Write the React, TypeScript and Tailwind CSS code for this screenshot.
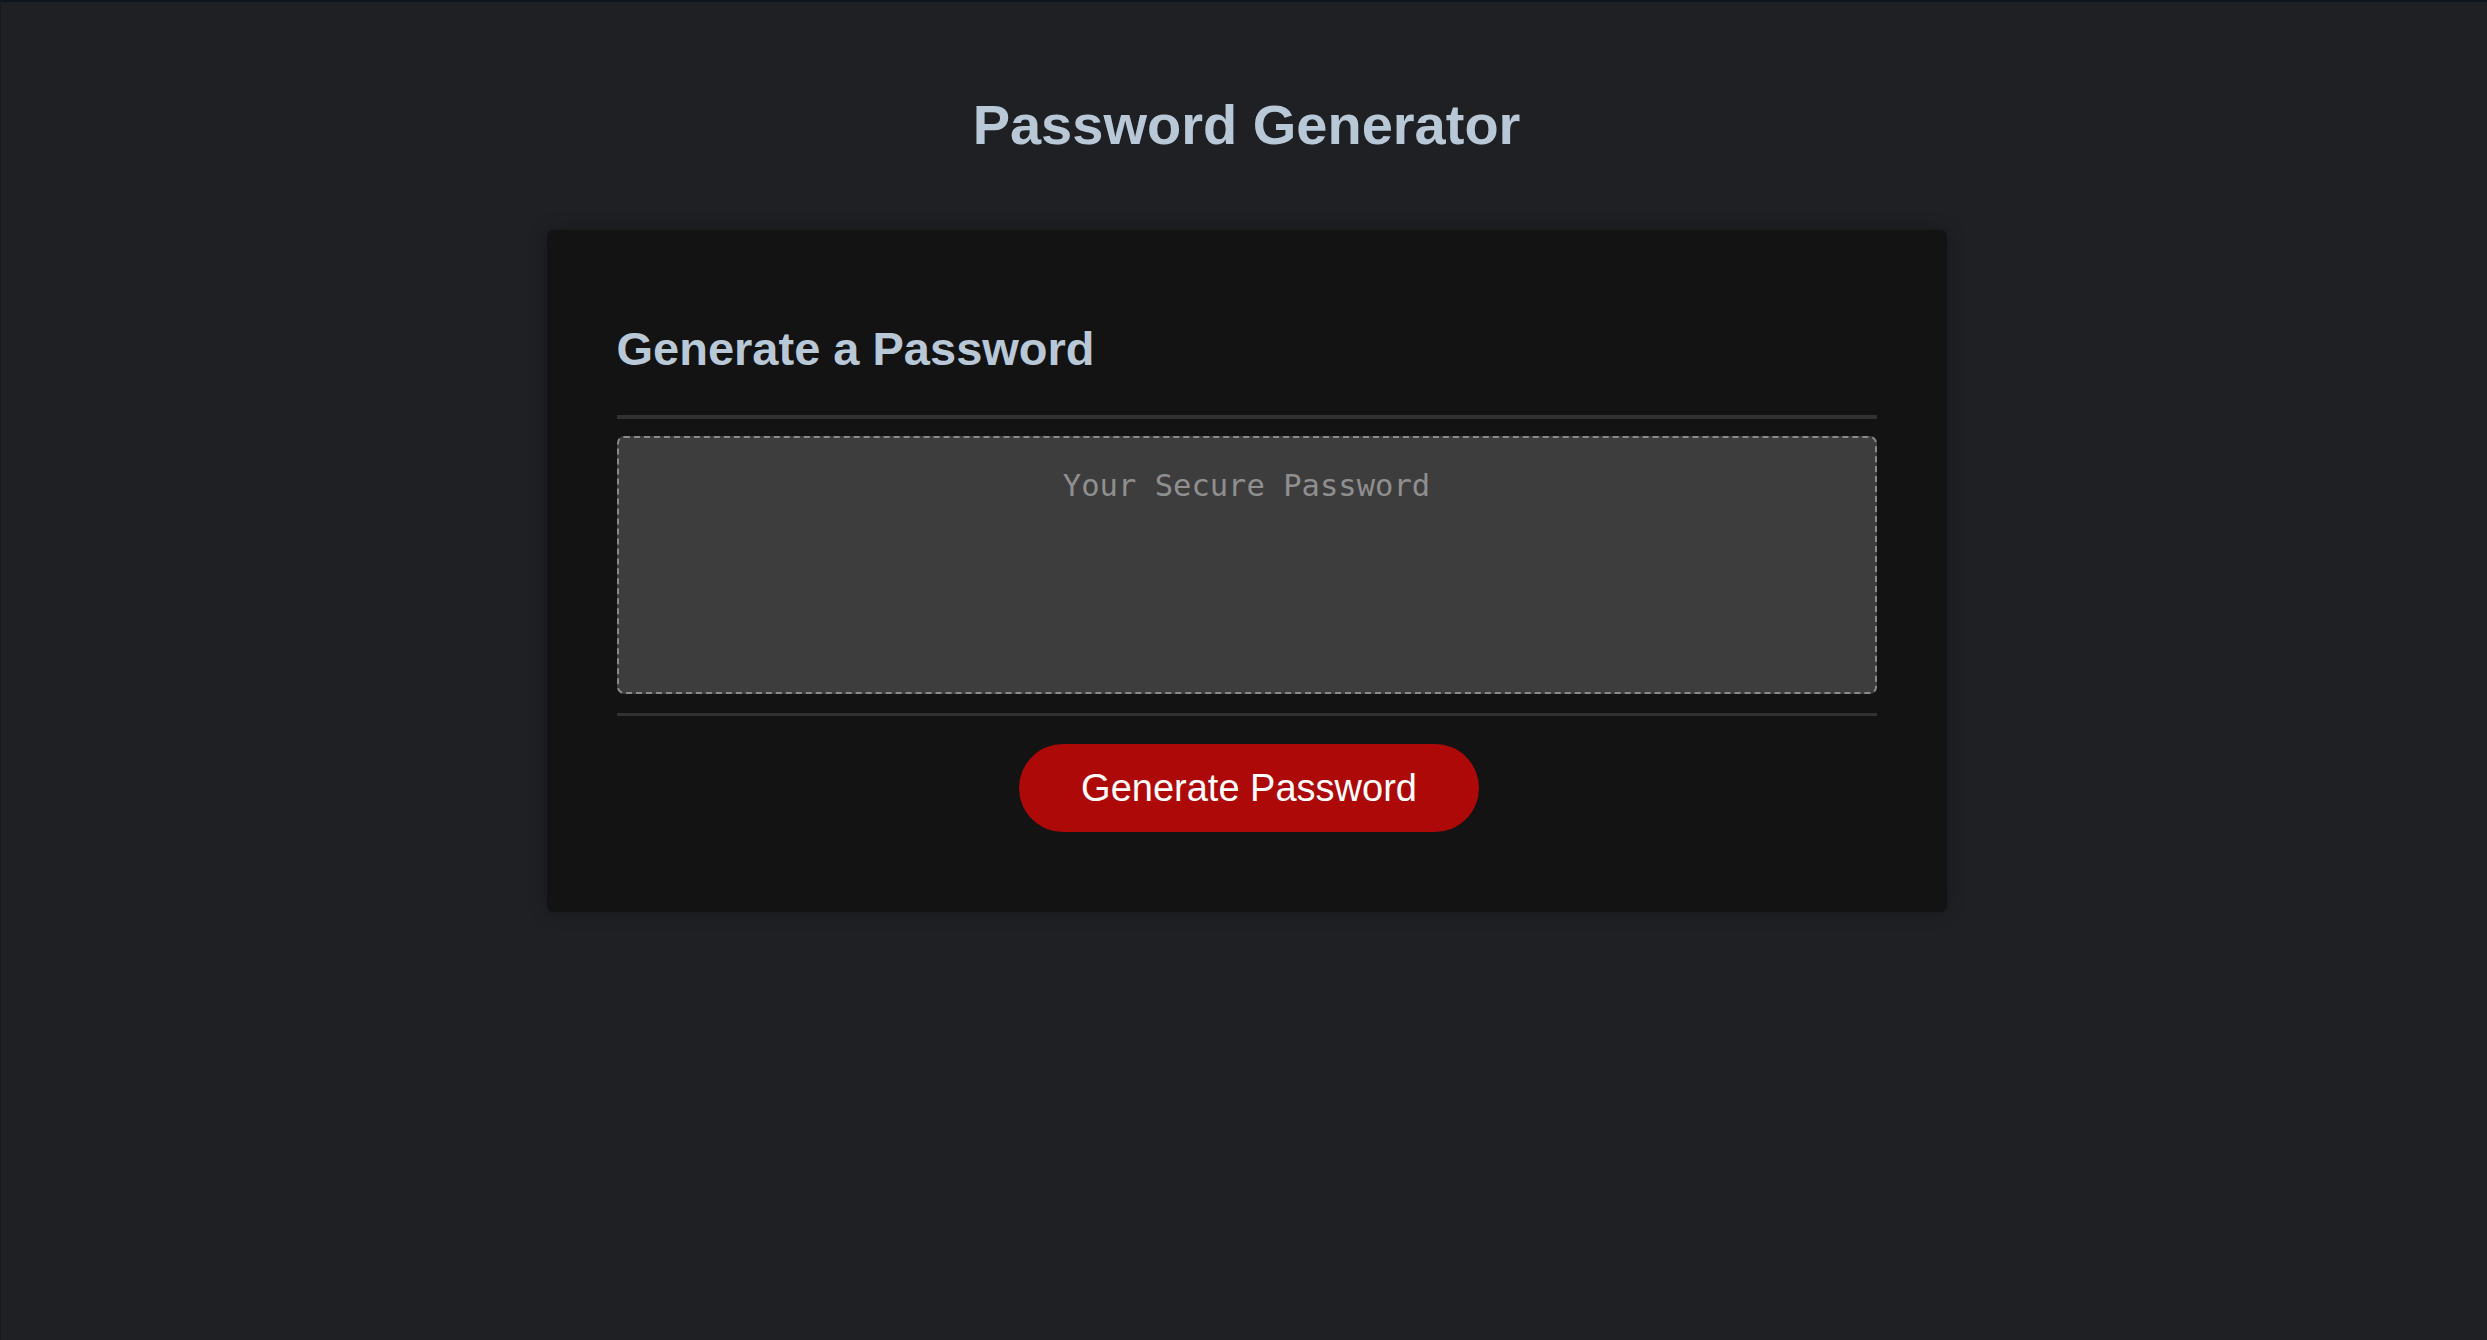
export default function App() {
  return (
    <div className="min-h-screen w-full bg-[#1f2023] border-t-2 border-t-[#10151c] border-l border-l-[#17191d] pl-[5px] flex flex-col items-center font-['Liberation_Sans',Arial,sans-serif]">
      <h1 className="mt-[90px] text-[56px] leading-[normal] font-bold text-[#b9c8d7]">Password Generator</h1>

      <div className="mt-[73px] w-[1400px] rounded-[6px] bg-[#131313] shadow-[0_0_18px_rgba(0,0,0,0.25)] px-[70px] pt-[91px] pb-[80px] flex flex-col">
        <h2 className="text-[47px] leading-[normal] font-bold text-[#b9c8d7]">Generate a Password</h2>
        <div className="mt-[39px] h-[4px] bg-[#313131]" />
        <textarea
          readOnly
          placeholder="Your Secure Password"
          aria-label="Generated Password"
          className="mt-[17px] h-[258px] w-full resize-none rounded-[7px] border-2 border-dashed border-[#8a8a8a] bg-[#3d3d3d] pt-[30px] px-4 text-center text-[30.5px] leading-[normal] text-[#d0d0d0] placeholder:text-[#8f8f8f] outline-none font-['DejaVu_Sans_Mono',monospace]"
        />
        <div className="mt-[19px] h-[3px] bg-[#313131]" />
        <div className="mt-[28px] flex justify-center pl-[5px]">
          <button className="h-[88px] px-[62px] rounded-full bg-[#ad0909] text-white text-[38px] leading-[normal]">
            Generate Password
          </button>
        </div>
      </div>
    </div>
  )
}
